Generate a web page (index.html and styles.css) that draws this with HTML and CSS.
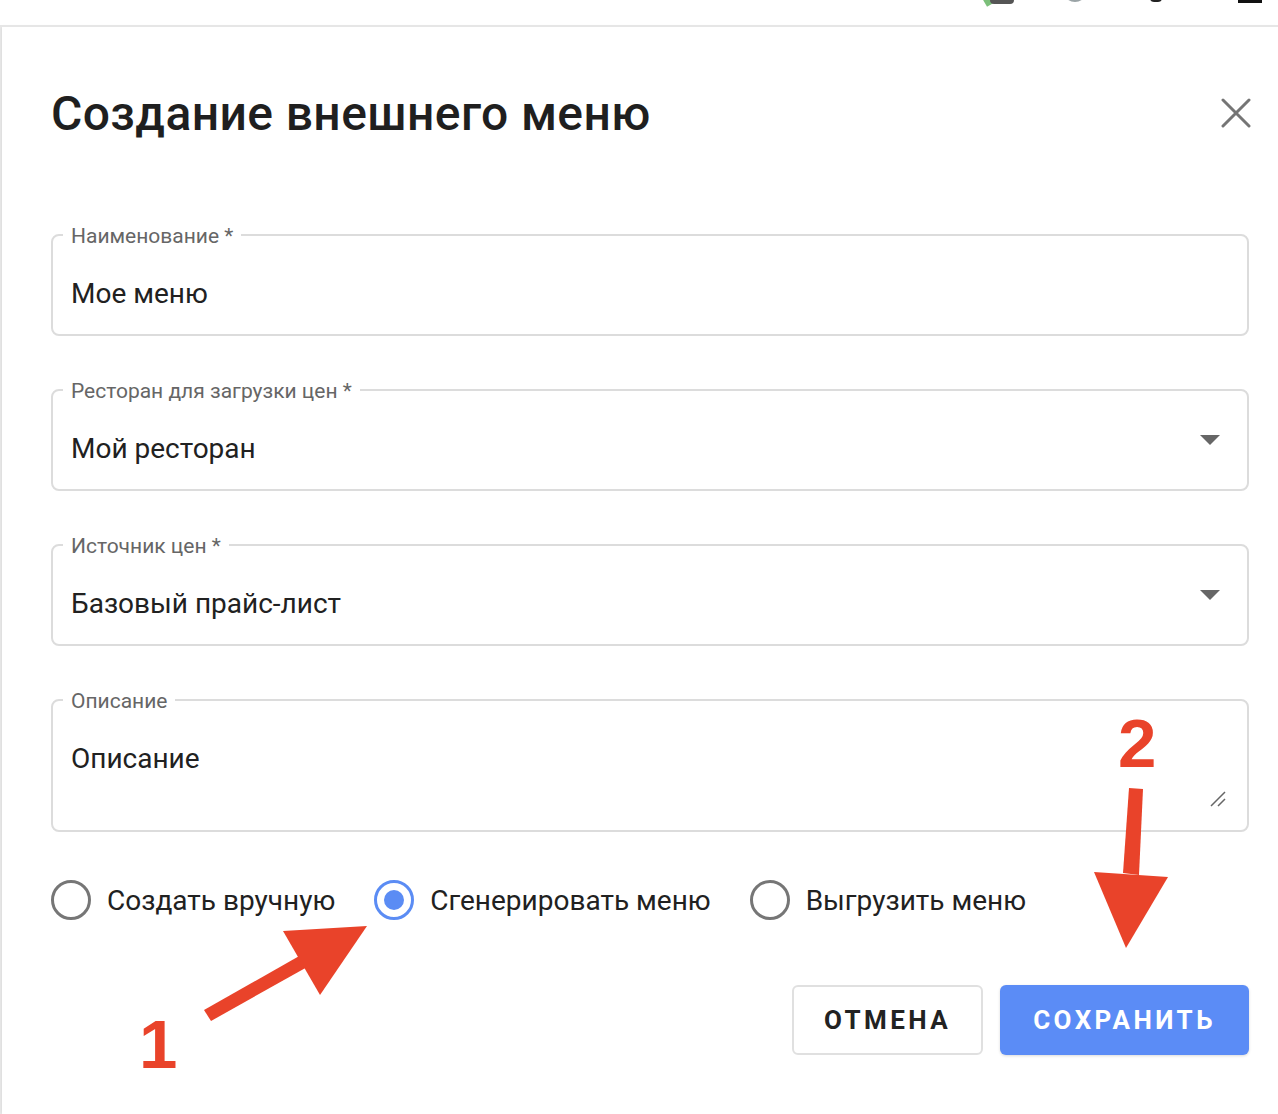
FILE: index.html
```html
<!DOCTYPE html>
<html lang="ru">
<head>
  <meta charset="UTF-8">
  <meta name="viewport" content="width=device-width, initial-scale=1.0">
  <title>Создание внешнего меню</title>
  <link rel="stylesheet" href="styles.css">
</head>
<body>
  <header class="topbar">
    <span class="tb-icon tb-green"></span>
    <span class="tb-icon tb-box"></span>
    <span class="tb-icon tb-avatar"></span>
    <span class="tb-icon tb-bell"></span>
    <span class="tb-icon tb-menu"></span>
  </header>

  <div class="page">
    <div class="side"></div>

    <main class="dialog">
      <div class="dialog-head">
        <h1 class="dialog-title">Создание внешнего меню</h1>
        <button class="close-btn" aria-label="Закрыть">
          <svg width="30" height="30" viewBox="0 0 30 30">
            <path d="M2 2 L28 28 M28 2 L2 28" stroke="#757575" stroke-width="3" stroke-linecap="round" fill="none"/>
          </svg>
        </button>
      </div>

      <div class="fields">
        <div class="field">
          <span class="field-label">Наименование *</span>
          <span class="field-value">Мое меню</span>
        </div>
        <div class="field">
          <span class="field-label">Ресторан для загрузки цен *</span>
          <span class="field-value">Мой ресторан</span>
          <span class="caret"></span>
        </div>
        <div class="field">
          <span class="field-label">Источник цен *</span>
          <span class="field-value">Базовый прайс-лист</span>
          <span class="caret"></span>
        </div>
        <div class="field field-area">
          <span class="field-label">Описание</span>
          <span class="field-value">Описание</span>
          <svg class="resize" width="18" height="18" viewBox="0 0 18 18">
            <path d="M1 16 L15 2 M8 16 L15 9" stroke="#666" stroke-width="1.5" fill="none"/>
          </svg>
        </div>
      </div>

      <div class="radios">
        <label class="radio"><span class="dot"></span>Создать вручную</label>
        <label class="radio checked"><span class="dot"></span>Сгенерировать меню</label>
        <label class="radio"><span class="dot"></span>Выгрузить меню</label>
      </div>

      <div class="actions">
        <button class="btn btn-cancel">Отмена</button>
        <button class="btn btn-save">Сохранить</button>
      </div>
    </main>
  </div>

  <!-- annotation arrows drawn over the dialog -->
  <svg class="notes" width="1278" height="1114" viewBox="0 0 1278 1114">
    <g fill="#e9432a">
      <polygon points="204,1010 211,1021 309,966 301,955"/>
      <polygon points="283,931 367,926 320,995"/>
      <polygon points="1129,788 1143,789 1139,875 1123,873"/>
      <polygon points="1094,872 1168,877 1126,948"/>
      <text x="139" y="1068" class="note-num">1</text>
      <text x="1118" y="767" class="note-num">2</text>
    </g>
  </svg>
</body>
</html>
```

FILE: styles.css
```css
body {
  margin: 0;
  font-family: 'Roboto', 'Noto Sans', sans-serif;
  color: #212121;
  background: #fff;
  overflow: hidden;
}

.topbar {
  height: 25px;
  border-bottom: 2px solid #e6e6e6;
  position: relative;
  overflow: hidden;
}

.tb-icon {
  position: absolute;
  display: block;
}

.tb-green {
  left: 982px;
  top: -12px;
  width: 8px;
  height: 18px;
  background: #7cbf7a;
  transform: rotate(-30deg);
}

.tb-box {
  left: 990px;
  top: -20px;
  width: 24px;
  height: 24px;
  border-radius: 4px;
  background: #555;
}

.tb-avatar {
  left: 1063px;
  top: -22px;
  width: 24px;
  height: 24px;
  border-radius: 50%;
  background: #9aa3a6;
}

.tb-bell {
  left: 1150px;
  top: -8px;
  width: 8px;
  height: 8px;
  border: 2px solid #222;
  border-top: none;
  border-radius: 0 0 4px 4px;
}

.tb-menu {
  left: 1238px;
  top: -4px;
  width: 24px;
  height: 7px;
  background: #111;
}

.page {
  display: flex;
  height: 1087px;
}

.side {
  width: 2px;
  background: #ececec;
}

.dialog {
  flex: 1;
  padding: 0 29px 0 49px;
  box-shadow: -1px 0 3px rgba(0, 0, 0, 0.08);
}

.dialog-head {
  display: flex;
  align-items: center;
  justify-content: space-between;
  height: 60px;
  margin-top: 56px;
}

.dialog-title {
  margin: 0;
  font-size: 48px;
  font-weight: 500;
  letter-spacing: 0.4px;
  color: #1f1f1f;
}

.close-btn {
  border: none;
  background: none;
  padding: 0;
  margin-right: -2px;
  width: 30px;
  height: 30px;
  cursor: pointer;
}

.fields {
  display: flex;
  flex-direction: column;
  gap: 53px;
  margin-top: 91px;
}

.field {
  position: relative;
  height: 102px;
  box-sizing: border-box;
  border: 2px solid #dcdcdc;
  border-radius: 8px;
  padding: 42px 18px 0;
}

.field-area {
  height: 133px;
}

.field-label {
  position: absolute;
  top: -12px;
  left: 10px;
  padding: 0 8px;
  background: #fff;
  font-size: 21px;
  line-height: 24px;
  color: #666;
}

.field-value {
  display: block;
  font-size: 28px;
  line-height: 32px;
  color: #212121;
}

.caret {
  position: absolute;
  right: 27px;
  top: 44px;
  width: 0;
  height: 0;
  border-left: 10px solid transparent;
  border-right: 10px solid transparent;
  border-top: 10px solid #666;
}

.resize {
  position: absolute;
  right: 19px;
  bottom: 22px;
}

.radios {
  display: flex;
  align-items: center;
  margin-top: 48px;
  height: 40px;
}

.radio {
  display: flex;
  align-items: center;
  gap: 16px;
  margin-right: 39px;
  font-size: 28px;
  color: #212121;
  cursor: pointer;
}

.dot {
  width: 40px;
  height: 40px;
  box-sizing: border-box;
  border: 3px solid #767676;
  border-radius: 50%;
  display: flex;
  align-items: center;
  justify-content: center;
}

.radio.checked .dot {
  border-color: #5b8cf4;
}

.radio.checked .dot::after {
  content: '';
  width: 20px;
  height: 20px;
  border-radius: 50%;
  background: #5b8cf4;
}

.actions {
  display: flex;
  justify-content: flex-end;
  gap: 17px;
  margin-top: 65px;
}

.btn {
  height: 70px;
  box-sizing: border-box;
  border-radius: 6px;
  font-family: 'Roboto', sans-serif;
  font-size: 26px;
  font-weight: 700;
  letter-spacing: 3.4px;
  text-transform: uppercase;
  cursor: pointer;
}

.btn-cancel {
  width: 191px;
  background: #fff;
  color: #222;
  border: 2px solid #e0e0e0;
}

.btn-save {
  width: 249px;
  background: #5b8cf6;
  color: #fff;
  border: none;
  box-shadow: 0 1px 3px rgba(0, 0, 0, 0.15);
}

.notes {
  position: absolute;
  top: 0;
  left: 0;
  pointer-events: none;
}

.note-num {
  font-family: 'Liberation Sans', Arial, sans-serif;
  font-weight: 700;
  font-size: 69px;
}
```
